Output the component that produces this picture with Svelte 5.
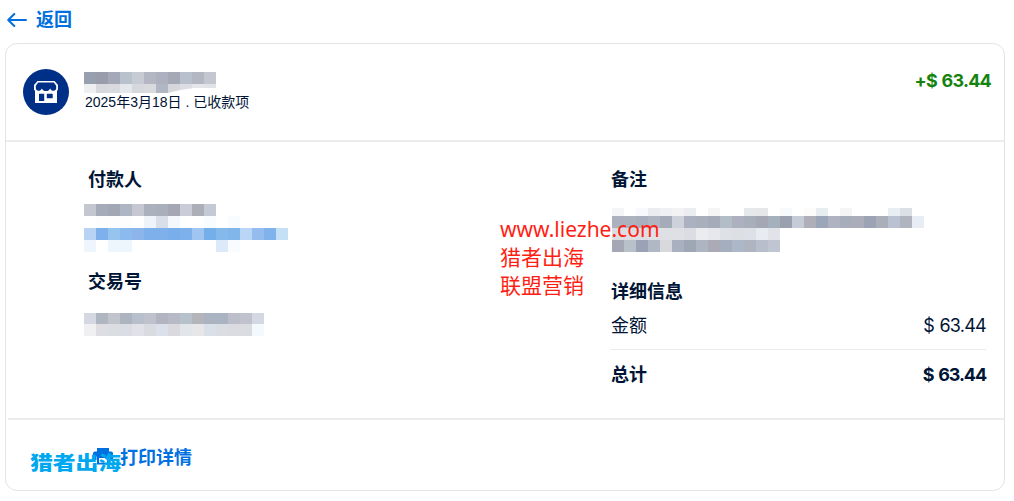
<script lang="ts">
  // Payment detail card. Private values are masked with mosaic strips,
  // each strip being a list of rows of 12px wide cells.

  interface MosaicRow {
    h: number;
    cells: string[];
  }

  const none = "transparent";

  const row = (h: number, colors: string): MosaicRow => ({
    h,
    cells: colors.split(" ").map((c) => (c === "-" ? none : `#${c}`)),
  });

  const nameMask = [
    row(12, "989fae 989cab a3a9b6 b9c1cd c7cbd3 b4b7c3 adb1bf a5a9b6 b9c0cd b3b6c3 c4c7d0"),
    row(9, "eeeff1 d7d8dd d9dade e4e7eb d7d8dd d9dade b0b7c3 d6d7dc dcdde2 e5e6ea e2e3e8"),
  ];

  const payerMask = [
    row(12, "c4c6d0 a5abb8 a1a7b3 afb6c3 c5c8d2 acb1be a9afbb a5a7b4 caccd7 acaeb8 c3cad6"),
    row(12, "- fdfdfe fdfdfe fdfdfe - eff4fa d9dfe8 f4f8fd - - f9fcfe - f9fcff"),
    row(12, "b9d3f5 7eb1eb 95c5ef 8abaee 8bb5eb 7eb1eb 7eb1eb 7aaeea 7eb1eb a0c5f0 75afea 85b8eb 81b6eb b9d6f6 94bcef 80b2eb c4e0f7"),
    row(12, "eef5fd - edf5fd edf5fd - - - - - - - dce9f9 f9fcff"),
  ];

  const transactionMask = [
    row(11, "d5d8e1 afb5c1 c2c4cc adb4bf b8bfcc bfc1cc b2b4bf b8b9c6 b7c1cc b4b5bb abb3c0 a9b3c1 bcbec9 c0c3ce d4d8e2"),
    row(12, "f0f0f2 dddde2 dadde1 dadee4 e1e2e8 dadbe0 dce0ea dbd9e0 e2e6e9 e7e7e9 dae0e8 dadde2 dadce1 dadce1 f4f9fd"),
  ];

  const noteMask = [
    row(8, "f4f5f7 - f7f9fc ebecf0 eef0f3 f3f3f3 ebedf1 - f5f5f6 - - e6e8ec e6e7e9 - f8f9fa - fefbfb e8edf0 - f5f5f5 - - - e9eef4 dce0e4"),
    row(12, "abb1be adb2bf a9afbd b0b5c2 a3acb8 cdd1da abb1be a9b0bb a5abb8 b3bdc8 adb1bf a8afbb a6a7b5 a4b1bd 9aa0ae c5ccd7 afafb9 9ba7b8 afb3c1 a7adbb abadbb 9ca3b5 aaafba bac2d2 b0b4be e7ecf5"),
    row(12, "dcdde1 dddee2 dcdee3 dde0e5 dfe0e4 dfe0e4 dcdde2 eaecf0 e7e8ed dee1e6 dcdfe3 dde0e6 e8ebf0 e2e3e8"),
    row(12, "a5a8b4 b8c0ca 9ca2b5 b0b7c5 d8d9dd a9b0c0 9ea8b5 adb5c3 aaabb7 a5aebc acb7c8 afb5c0 b7bfcc c0c6d1"),
  ];
</script>

{#snippet mosaic(rows: MosaicRow[])}
  {#each rows as r}
    <div class="mosaic-row" style="height: {r.h}px">
      {#each r.cells as color}
        <span style="background: {color}"></span>
      {/each}
    </div>
  {/each}
{/snippet}

<div class="page">
  <div class="back">
    <svg width="20" height="14" viewBox="0 0 20 14" fill="none" stroke="currentColor" stroke-width="2" stroke-linecap="round" stroke-linejoin="round">
      <path d="M19 7H1.2M7.3 1 1.2 7l6.1 6" />
    </svg>
    <span>返回</span>
  </div>

  <section class="card">
    <header class="head">
      <div class="avatar">
        <svg width="24" height="22" viewBox="0 0 24 22">
          <path fill="#fff" d="M3.500 0h17L24 4v4.500l-1 1.500V22H1V10L0 8.500V4z" />
          <path fill="#002f87" d="M4.200 1.600h15.600L22.200 4.700v2.500c0 1.400-1.200 2.500-2.700 2.500-1.600 0-2.600-.9-3.300-2.300-.8 1.700-2.200 2.600-4.200 2.600S8.600 9.100 7.800 7.400C7.100 8.800 6.100 9.700 4.500 9.700 3 9.700 1.800 8.600 1.800 7.200V4.700z" />
          <path fill="#002f87" d="M5 12.700h5.200V20H5zM12.800 12.700h5.900v4.500h-5.900z" />
        </svg>
      </div>
      <div class="who">
        <div class="name-mask">{@render mosaic(nameMask)}</div>
        <div class="date">2025年3月18日 . 已收款项</div>
      </div>
      <div class="received">+$ 63.44</div>
    </header>

    <div class="body">
      <div class="left">
        <h3>付款人</h3>
        <div class="payer-mask">{@render mosaic(payerMask)}</div>
        <h3>交易号</h3>
        <div class="transaction-mask">{@render mosaic(transactionMask)}</div>
      </div>

      <div class="right">
        <h3>备注</h3>
        <div class="note-mask">{@render mosaic(noteMask)}</div>
        <h3>详细信息</h3>
        <div class="line amount">
          <span>金额</span>
          <span class="value">$ 63.44</span>
        </div>
        <div class="line total">
          <span>总计</span>
          <span class="value">$ 63.44</span>
        </div>
      </div>
    </div>

    <footer class="foot">
      <svg width="20" height="18" viewBox="0 0 20 18" fill="#0070e0">
        <path d="M4 0h12v4H4zM2 3.500h16a2 2 0 0 1 2 2V12h-3.500V8.500h-13V12H0V5.500a2 2 0 0 1 2-2z" />
        <path d="M4 8h12v8.500H4zm2 2v4.700h8V10z" fill-rule="evenodd" />
      </svg>
      <span>打印详情</span>
    </footer>
  </section>

  <div class="watermark">
    <div class="url">www.liezhe.com</div>
    <div>猎者出海</div>
    <div>联盟营销</div>
  </div>
  <div class="brand">猎者出海</div>
</div>

<style>
  :global(body) {
    background: #fff;
  }
  .page {
    position: relative;
    box-sizing: border-box;
    width: 1014px;
    height: 501px;
    padding: 0 9px 0 5px;
    overflow: hidden;
    color: #001435;
    font-family: "Liberation Sans", "Noto Sans CJK SC", sans-serif;
  }
  .back {
    display: flex;
    align-items: center;
    gap: 9px;
    height: 40px;
    margin: 0 0 3px 2px;
    color: #0070e0;
    font-size: 18px;
    font-weight: 700;
    line-height: 24px;
  }
  .card {
    box-sizing: border-box;
    height: 448px;
    border: 1px solid #e2e4e6;
    border-radius: 12px;
  }
  .head {
    display: flex;
    box-sizing: border-box;
    height: 98px;
    padding: 25px 13px 0 17px;
    border-bottom: 2px solid #edeeec;
  }
  .avatar {
    display: flex;
    align-items: center;
    justify-content: center;
    width: 46px;
    height: 46px;
    border-radius: 50%;
    background: #002f87;
  }
  .who {
    margin-left: 15px;
  }
  .name-mask {
    height: 21px;
    margin-top: 3px;
    clip-path: polygon(0 0, 132px 0, 132px 16px, 110px 16px, 96px 18px, 84px 21px, 0 21px);
  }
  .date {
    margin: -1px 0 0 1px;
    font-size: 14px;
    line-height: 20px;
    white-space: nowrap;
  }
  .received {
    margin: 0 0 0 auto;
    color: #15840f;
    font-family: Inter, sans-serif;
    font-size: 18px;
    font-weight: 700;
    line-height: 24px;
    letter-spacing: -0.75px;
    word-spacing: 1px;
  }
  .body {
    display: flex;
    justify-content: space-between;
    box-sizing: border-box;
    height: 276px;
    padding: 26px 18px 0 78px;
  }
  h3 {
    margin: 0;
    font-size: 18px;
    font-weight: 700;
    line-height: 24px;
  }
  .left h3 {
    padding-left: 4px;
  }
  .payer-mask {
    margin: 12px 0 18px;
  }
  .transaction-mask {
    margin-top: 19px;
  }
  .right {
    width: 375px;
  }
  .note-mask {
    margin: 16px 0 28px 1px;
  }
  .line {
    display: flex;
    justify-content: space-between;
    font-size: 18px;
    line-height: 24px;
  }
  .amount {
    padding: 10px 0 11px;
    border-bottom: 1px solid #e8e9ea;
  }
  .total {
    padding-top: 13px;
    font-weight: 700;
  }
  .value {
    font-family: Inter, sans-serif;
    letter-spacing: -0.75px;
    word-spacing: 1px;
  }
  .total .value {
    letter-spacing: -1.1px;
    word-spacing: 1.500px;
  }
  .mosaic-row {
    display: flex;
  }
  .mosaic-row span {
    width: 12px;
  }
  .foot {
    display: flex;
    gap: 7px;
    margin-left: 2px;
    padding: 26px 0 0 85px;
    border-top: 2px solid #edeeec;
    color: #0070e0;
    font-size: 18px;
    font-weight: 700;
    line-height: 24px;
  }
  .foot svg {
    margin-top: 2px;
  }
  .watermark {
    position: absolute;
    left: 500px;
    top: 215px;
    color: #ff1e14;
    font-family: "Noto Sans", "Noto Sans CJK SC", sans-serif;
    font-size: 21px;
    line-height: 28px;
  }
  .url {
    white-space: nowrap;
  }
  .brand {
    position: absolute;
    left: 30px;
    top: 449px;
    color: #00a8f0;
    font-family: "Noto Sans CJK SC", sans-serif;
    font-size: 22.8px;
    font-weight: 900;
    line-height: 26px;
    transform: scaleY(0.84);
  }
</style>
